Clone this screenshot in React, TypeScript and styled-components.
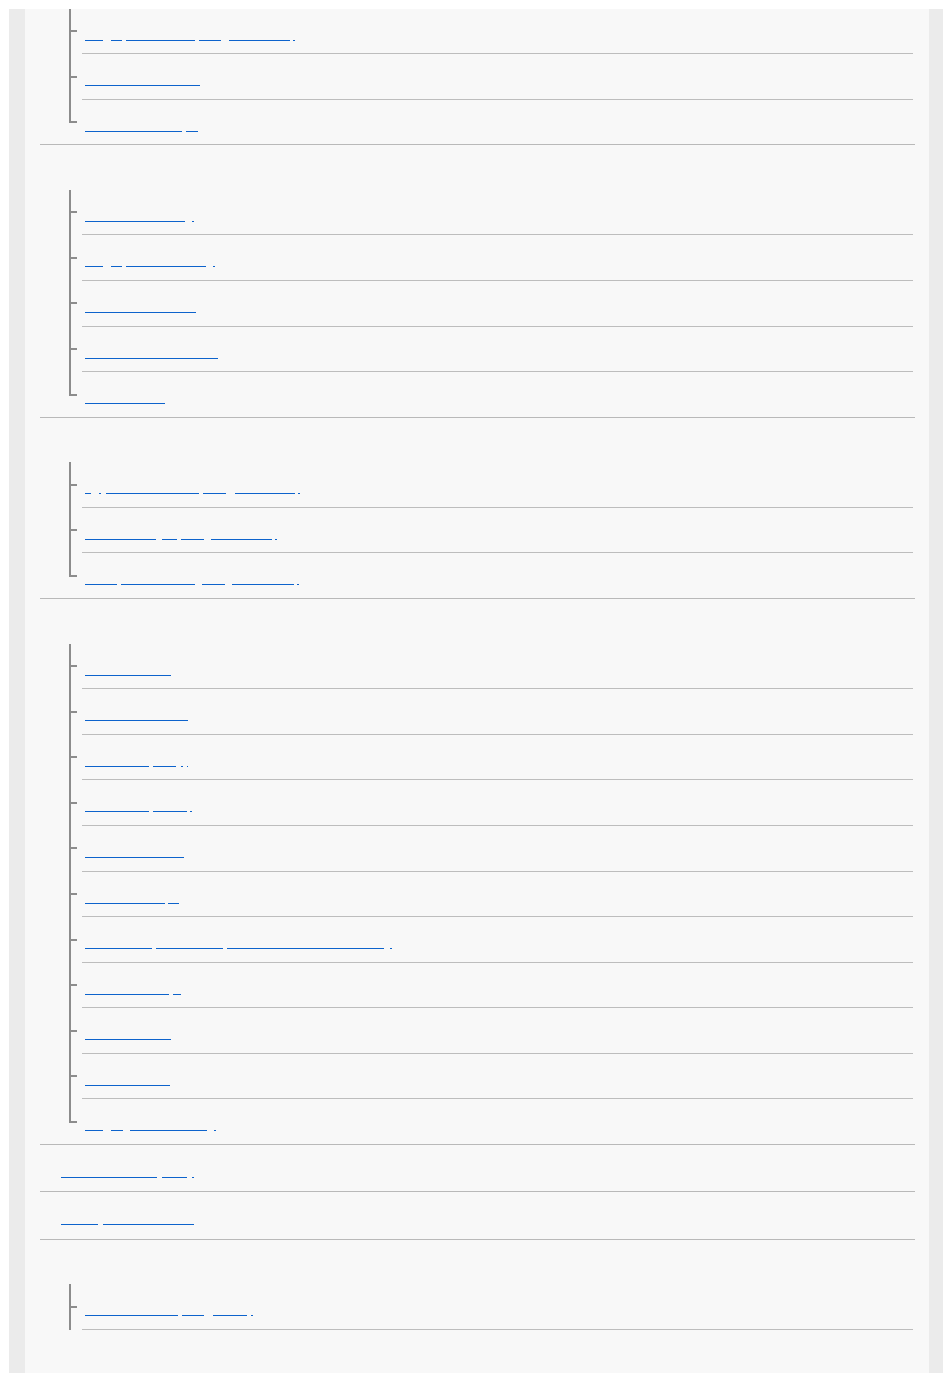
import styled, { createGlobalStyle } from "styled-components";

const GlobalStyle = createGlobalStyle`
  html, body {
    background: #ffffff;
  }
  body {
    margin: 9px 7px 7px 9px;
    font-family: "Liberation Sans", Arial, sans-serif;
  }
`;

const Frame = styled.div`
  background: #ebebeb;
  padding: 0 14px 0 16px;
`;

const Panel = styled.div`
  background: #f8f8f8;
  padding: 0 14px 43px 15px;
  overflow: hidden;
`;

const Toc = styled.ul`
  list-style: none;
  margin: -0.5px 0 0;
  padding: 0;
`;

const Group = styled.li<{ $divider: boolean }>`
  border-bottom: ${(p) => (p.$divider ? "1px solid #b9b9b9" : "none")};
`;

const Heading = styled.div`
  padding: 10px 0 10px 21px;
  line-height: 24.6px;
  font-size: 15px;
  color: transparent;
`;

const TopLink = styled.a`
  display: block;
  padding: 10px 0 10px 21px;
  line-height: 26.3px;
  font-size: 15px;
  color: transparent;
  text-decoration: none;
  white-space: nowrap;
`;

const SubList = styled.ul`
  list-style: none;
  margin: 0 2px 0 42px;
  padding: 0;
`;

const SubItem = styled.li<{ $last: boolean }>`
  position: relative;
  padding: 10px 0 10px 3px;
  line-height: 24.58px;
  font-size: 15px;
  border-bottom: ${(p) => (p.$last ? "none" : "1px solid #bdbdbd")};

  /* tree lines */
  &::before {
    content: "";
    position: absolute;
    left: -13px;
    top: 0;
    width: 2px;
    height: ${(p) => (p.$last ? "23.5px" : "calc(100% + 1px)")};
    background: #8c8c8c;
  }
  &::after {
    content: "";
    position: absolute;
    left: -12px;
    top: 21.5px;
    width: 7px;
    height: 2px;
    background: #8c8c8c;
  }
`;

const ItemLink = styled.a`
  color: transparent;
  text-decoration: none;
  white-space: nowrap;
`;

const Word = styled.span<{ $w: number; $gap: number }>`
  display: inline-block;
  vertical-align: baseline;
  width: ${(p) => p.$w}px;
  height: 14px;
  overflow: hidden;
  margin: 0 ${(p) => p.$gap}px -5px 0;
  border-bottom: 1.5px solid #0d63cc;
  color: transparent;
  white-space: nowrap;
`;

// [text, underline width, gap to next word]
type Seg = [string, number, number?];

type Section = {
  heading?: string;
  link?: Seg[];
  items?: Seg[][];
  open?: boolean;
};

const sections: Section[] = [
  {
    items: [
      [["Set", 18, 8], ["up", 11, 4], ["recording", 69, 4], ["the", 22, 8], ["images", 61, 3], [".", 1.5]],
      [["Shooting mode", 115]],
      [["Picture effect", 97, 4], ["s", 12]],
    ],
  },
  {
    heading: "Viewing",
    items: [
      [["Playing images", 100, 7], [".", 1.5]],
      [["Vie", 18, 8], ["w", 11, 4], ["thumbnails", 80, 7], [".", 1.5]],
      [["Enlarging images", 111]],
      [["Rotating recorded images", 133]],
      [["Slide show", 80]],
    ],
  },
  {
    heading: "Deleting",
    items: [
      [["A", 6, 8], ["-", 2, 5], ["Deleting", 93, 4], ["the", 23, 9], ["images", 60, 3], [".", 1.5]],
      [["Deleting", 71, 6], ["a", 15, 4], ["few", 23, 7], ["images", 61, 3], [".", 1.5]],
      [["All", 32, 4], ["deleting", 74, 7], ["the", 23, 7], ["images", 62, 3], [".", 1.5]],
    ],
  },
  {
    heading: "Settings",
    items: [
      [["Image size", 86]],
      [["Quality setting", 103]],
      [["Focus mode", 64, 4], ["set", 23, 5], [".", 1.5, 4], [".", 1.5]],
      [["Metering", 64, 4], ["mode", 34, 3], [".", 1.5]],
      [["White balance", 99]],
      [["Face detect", 80, 3], ["s", 11]],
      [["Shooting", 67, 4], ["settings", 67, 4], ["for the recording medium", 157, 6], [".", 1.5]],
      [["Drive mode", 84, 4], ["s", 8]],
      [["Grid lines", 86]],
      [["Auto review", 85]],
      [["Set", 18, 8], ["up", 12, 7], ["date time", 77, 7], [".", 1.5]],
    ],
  },
  { link: [["Using the menu", 96, 5], ["list", 25, 5], [".", 1.5]] },
  { link: [["Top", 37, 5], ["Troubleshooting", 91]] },
  {
    heading: "Others",
    open: true,
    items: [[["Specifications", 93, 4], ["of", 22, 9], ["this", 34, 4], [".", 1.5]]],
  },
];

function Label({ segs }: { segs: Seg[] }) {
  return (
    <>
      {segs.map(([text, w, gap], i) => (
        <Word key={i} $w={w} $gap={gap ?? 0}>
          {text}
        </Word>
      ))}
    </>
  );
}

export default function App() {
  return (
    <>
      <GlobalStyle />
      <Frame>
        <Panel>
          <Toc>
            {sections.map((s, i) => (
              <Group key={i} $divider={!s.open}>
                {s.link ? (
                  <TopLink href="#">
                    <Label segs={s.link} />
                  </TopLink>
                ) : (
                  <>
                    {s.heading ? <Heading>{s.heading}</Heading> : null}
                    <SubList>
                      {s.items!.map((segs, j) => (
                        <SubItem key={j} $last={!s.open && j === s.items!.length - 1}>
                          <ItemLink href="#">
                            <Label segs={segs} />
                          </ItemLink>
                        </SubItem>
                      ))}
                    </SubList>
                  </>
                )}
              </Group>
            ))}
          </Toc>
        </Panel>
      </Frame>
    </>
  );
}
